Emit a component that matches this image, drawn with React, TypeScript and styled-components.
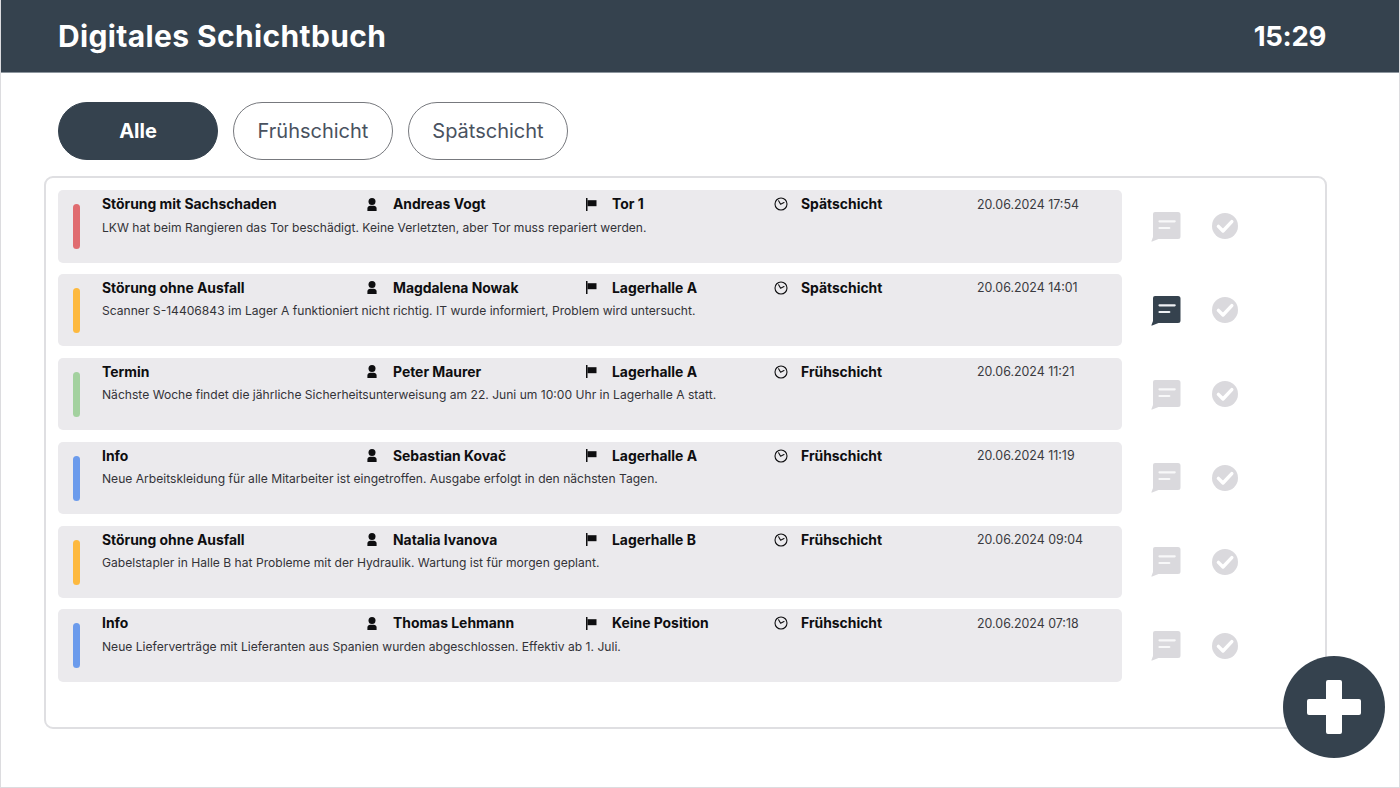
import React from "react";
import styled, { createGlobalStyle } from "styled-components";

const Global = createGlobalStyle`
  html, body { margin: 0; padding: 0; background: #fff; }
  body { font-family: "Inter", "Open Sans", sans-serif; color: #0e0e10; }
  * { box-sizing: border-box; }
`;

const Page = styled.div`
  position: relative;
  width: 1400px;
  height: 788px;
  overflow: hidden;
  border: 1px solid #dcdcdf;
  border-top: 0;
  background: #fff;
`;
const Header = styled.header`
  height: 73px;
  background: #35424e;
  border-bottom: 1px solid #8d969e;
  display: flex;
  align-items: center;
  justify-content: space-between;
  padding: 0 73px 0 57px;
  color: #fff;
`;
const Title = styled.h1`
  margin: 0;
  font-size: 30px;
  font-weight: 700;
  letter-spacing: 0.36px;
`;
const Clock = styled.div`
  font-size: 27.5px;
  font-weight: 700;
  letter-spacing: -0.3px;
`;
const Filters = styled.nav`
  display: flex;
  gap: 15px;
  padding: 29px 0 16px 57px;
`;
const Pill = styled.button<{ $active?: boolean }>`
  width: 160px;
  height: 58px;
  border-radius: 29px;
  border: 1px solid ${(p) => (p.$active ? "#35424e" : "#77797e")};
  background: ${(p) => (p.$active ? "#35424e" : "#fff")};
  color: ${(p) => (p.$active ? "#fff" : "#49525f")};
  font-family: inherit;
  font-size: 20px;
  font-weight: ${(p) => (p.$active ? 700 : 400)};
  padding: 0;
`;
const Panel = styled.section`
  margin-left: 43px;
  width: 1283px;
  height: 553px;
  border: 2px solid #dfdfe2;
  border-radius: 9px;
  padding: 12px 0 0 12px;
  display: flex;
  flex-direction: column;
  gap: 11.4px;
`;
const Row = styled.div`
  display: flex;
  align-items: center;
`;
const Card = styled.article`
  width: 1064px;
  height: 72.5px;
  background: #ebeaed;
  border-radius: 5px;
  padding: 14px 0 0 15px;
  display: flex;
  gap: 22px;
`;
const Bar = styled.div<{ $color: string }>`
  width: 7px;
  height: 45px;
  border-radius: 4px;
  background: ${(p) => p.$color};
`;
const Body = styled.div`
  flex: 1;
`;
const Meta = styled.div`
  display: grid;
  grid-template-columns: 264px 219px 189px 203px auto;
  height: 0;
  align-items: center;
`;
const MetaCell = styled.div`
  display: flex;
  align-items: center;
  font-size: 13.9px;
  font-weight: 700;
  white-space: nowrap;
  height: 0;
`;
const IconSlot = styled.span`
  display: inline-flex;
  justify-content: flex-start;
  width: 27px;
  flex: none;
`;
const DateText = styled.div`
  font-size: 12.4px;
  font-weight: 400;
  color: #3a3a3f;
  white-space: nowrap;
  height: 0;
  display: flex;
  align-items: center;
`;
const Description = styled.p`
  margin: 0;
  padding-top: 15.6px;
  font-size: 12.1px;
  line-height: 16px;
  color: #333338;
  white-space: nowrap;
`;
const Actions = styled.div`
  display: flex;
  align-items: center;
  margin-left: 29px;
  gap: 31px;
`;
const Fab = styled.button`
  position: absolute;
  left: 1282px;
  top: 656px;
  width: 102px;
  height: 102px;
  border-radius: 50%;
  border: 0;
  padding: 0;
  background: #35424e;
  display: flex;
  align-items: center;
  justify-content: center;
`;

const Person = () => (
  <svg width="12" height="13" viewBox="0 0 12 13" fill="#0e0e10">
    <ellipse cx="6" cy="3.5" rx="3.5" ry="3.5" />
    <path d="M1.4 13v-2.6C1.4 8.8 2.8 7.8 4.2 7.8h3.6c1.4 0 2.8 1 2.8 2.6V13z" />
  </svg>
);
const Flag = () => (
  <svg width="12" height="13" viewBox="0 0 12 13" fill="#0e0e10">
    <rect x="1" y="0" width="1.5" height="13" />
    <path d="M2.5 2.2h9v6h-9z" />
  </svg>
);
const ClockIcon = () => (
  <svg width="14" height="14" viewBox="0 0 14 14" fill="none" stroke="#0e0e10" strokeWidth="1.1" strokeLinecap="round" strokeLinejoin="round">
    <circle cx="7" cy="7" r="6" />
    <path d="M4.6 3.8L6.6 7.2 10 5.6" />
  </svg>
);
const Chat = ({ color }: { color: string }) => (
  <svg width="30" height="31" viewBox="0 0 30 31">
    <path
      d="M4 1h23a2.5 2.5 0 0 1 2.5 2.5v22a2.5 2.5 0 0 1-2.5 2.5H7.5L1.2 30.6c-.5.2-.9-.1-.7-.6L2 26V3a2 2 0 0 1 2-2z"
      fill={color}
    />
    <path d="M8.5 10.3h15.2M8.5 17h9.8" stroke={color === "#35424e" ? "#eef0f3" : "#f8f8f9"} strokeWidth="2.2" strokeLinecap="round" fill="none" />
  </svg>
);
const Check = () => (
  <svg width="26" height="26" viewBox="0 0 26 26">
    <circle cx="13" cy="13" r="13" fill="#dad9dd" />
    <path d="M6.4 13.4l4.6 4.6 8.8-9.4" fill="none" stroke="#fff" strokeWidth="3.4" strokeLinecap="round" strokeLinejoin="round" />
  </svg>
);

const RED = "#e06c70";
const YELLOW = "#fdb93f";
const GREEN = "#a3d19f";
const BLUE = "#6b9bec";

const rows = [
  { color: RED, title: "Störung mit Sachschaden", name: "Andreas Vogt", place: "Tor 1", shift: "Spätschicht", date: "20.06.2024 17:54", text: "LKW hat beim Rangieren das Tor beschädigt. Keine Verletzten, aber Tor muss repariert werden." },
  { color: YELLOW, title: "Störung ohne Ausfall", name: "Magdalena Nowak", place: "Lagerhalle A", shift: "Spätschicht", date: "20.06.2024 14:01", text: "Scanner S-14406843 im Lager A funktioniert nicht richtig. IT wurde informiert, Problem wird untersucht.", active: true },
  { color: GREEN, title: "Termin", name: "Peter Maurer", place: "Lagerhalle A", shift: "Frühschicht", date: "20.06.2024 11:21", text: "Nächste Woche findet die jährliche Sicherheitsunterweisung am 22. Juni um 10:00 Uhr in Lagerhalle A statt." },
  { color: BLUE, title: "Info", name: "Sebastian Kovač", place: "Lagerhalle A", shift: "Frühschicht", date: "20.06.2024 11:19", text: "Neue Arbeitskleidung für alle Mitarbeiter ist eingetroffen. Ausgabe erfolgt in den nächsten Tagen." },
  { color: YELLOW, title: "Störung ohne Ausfall", name: "Natalia Ivanova", place: "Lagerhalle B", shift: "Frühschicht", date: "20.06.2024 09:04", text: "Gabelstapler in Halle B hat Probleme mit der Hydraulik. Wartung ist für morgen geplant." },
  { color: BLUE, title: "Info", name: "Thomas Lehmann", place: "Keine Position", shift: "Frühschicht", date: "20.06.2024 07:18", text: "Neue Lieferverträge mit Lieferanten aus Spanien wurden abgeschlossen. Effektiv ab 1. Juli." },
];

export default function App() {
  return (
    <Page>
      <Global />
      <Header>
        <Title>Digitales Schichtbuch</Title>
        <Clock>15:29</Clock>
      </Header>
      <Filters>
        <Pill $active>Alle</Pill>
        <Pill>Frühschicht</Pill>
        <Pill>Spätschicht</Pill>
      </Filters>
      <Panel>
        {rows.map((r) => (
          <Row key={r.date}>
            <Card>
              <Bar $color={r.color} />
              <Body>
                <Meta>
                  <MetaCell>{r.title}</MetaCell>
                  <MetaCell>
                    <IconSlot><Person /></IconSlot>
                    {r.name}
                  </MetaCell>
                  <MetaCell>
                    <IconSlot><Flag /></IconSlot>
                    {r.place}
                  </MetaCell>
                  <MetaCell>
                    <IconSlot><ClockIcon /></IconSlot>
                    {r.shift}
                  </MetaCell>
                  <DateText>{r.date}</DateText>
                </Meta>
                <Description>{r.text}</Description>
              </Body>
            </Card>
            <Actions>
              <Chat color={r.active ? "#35424e" : "#dad9dd"} />
              <Check />
            </Actions>
          </Row>
        ))}
      </Panel>
      <Fab aria-label="Neu">
        <svg width="54" height="54" viewBox="0 0 54 54" fill="#fff">
          <path d="M19 2a2 2 0 0 1 2-2h12a2 2 0 0 1 2 2v17h17a2 2 0 0 1 2 2v12a2 2 0 0 1-2 2H35v17a2 2 0 0 1-2 2H21a2 2 0 0 1-2-2V35H2a2 2 0 0 1-2-2V21a2 2 0 0 1 2-2h17z" />
        </svg>
      </Fab>
    </Page>
  );
}
